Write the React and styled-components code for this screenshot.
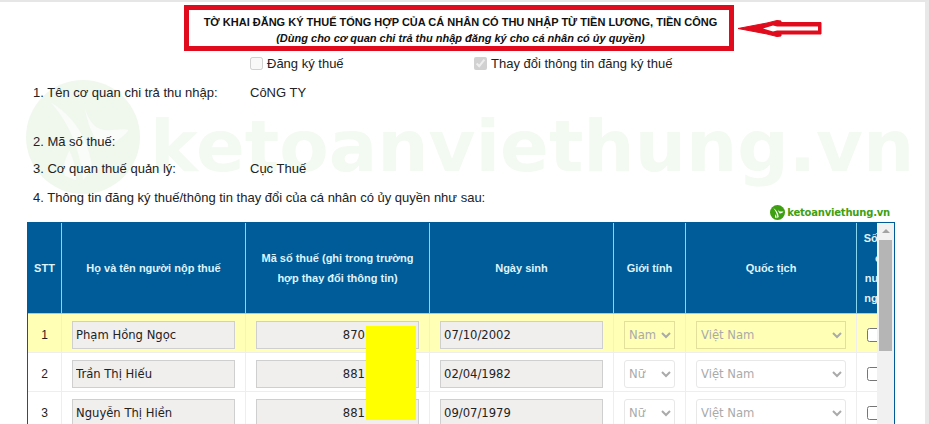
import React from 'react';
import styled, {createGlobalStyle} from 'styled-components';

const GlobalStyle = createGlobalStyle`
  html, body {
    margin: 0;
    height: 100%;
    overflow: hidden;
    background: #fff;
  }
  body {
    font-family: "Liberation Sans", Arial, sans-serif;
    color: #222;
  }
`;

const Page = styled.div`
  position: relative;
  width: 929px;
  height: 424px;
  overflow: hidden;
  box-sizing: border-box;
  border-top: 2px solid #e6e6e6;
  border-right: 4px solid #e8e8e8;
`;

const Watermark = styled.div`
  position: absolute;
  left: 26px;
  top: 78px;
  display: flex;
  align-items: flex-start;
  gap: 10px;
`;

const WatermarkText = styled.span`
  padding-top: 10px;
  color: #f3faf1;
  font-family: "DejaVu Sans", sans-serif;
  font-weight: 700;
  font-size: 72px;
  line-height: 113px;
  white-space: nowrap;
`;

const Content = styled.div`
  position: relative;
`;

const TitleRow = styled.div`
  display: flex;
  align-items: center;
  padding: 3px 0 0 184px;
  gap: 3px;
`;

const TitleBox = styled.div`
  box-sizing: border-box;
  width: 550px;
  height: 46px;
  padding-left: 3px;
  border: 5px solid #e00b1c;
  text-align: center;
  color: #111;
`;

const Title = styled.div`
  font-weight: 700;
  font-size: 11px;
  line-height: 17px;
  margin-top: 4px;
`;

const Subtitle = styled.div`
  font-weight: 700;
  font-style: italic;
  font-size: 11px;
  line-height: 15px;
`;

const CheckRow = styled.div`
  display: flex;
  padding: 2px 0 0 250px;
  height: 20px;
  align-items: center;
`;

const CheckLabel = styled.label`
  display: flex;
  align-items: center;
  gap: 4px;
  width: 224px;
  font-size: 13px;
`;

const GrayCheck = styled.input`
  width: 13px;
  height: 13px;
  margin: 0;
`;

const InfoRow = styled.div`
  display: flex;
  padding-left: 33px;
  height: ${p => p.$h}px;
  margin-top: ${p => p.$top || 0}px;
  align-items: center;
  font-size: 13px;
  white-space: nowrap;
`;

const InfoLabel = styled.span`
  width: 217px;
`;

const BrandRow = styled.div`
  display: flex;
  justify-content: flex-end;
  align-items: center;
  gap: 2px;
  height: 15px;
  margin-top: -2px;
  padding-right: 35px;
  color: #3e9f12;
  font-family: "DejaVu Sans", sans-serif;
  font-size: 10px;
  font-weight: 700;
  letter-spacing: -0.2px;
`;

const Frame = styled.div`
  display: flex;
  box-sizing: border-box;
  width: 868px;
  margin: 2px 0 0 27px;
  border: 1px solid #005c97;
  border-bottom: 0;
  height: 210px;
`;

const TableClip = styled.div`
  flex: 1;
  min-width: 0;
  overflow: hidden;
`;

const Table = styled.table`
  table-layout: fixed;
  width: 873px;
  border-collapse: separate;
  border-spacing: 0;
`;

const HeadCell = styled.th`
  height: 91px;
  padding: 0;
  box-sizing: border-box;
  background: #005b99;
  color: #dff3fb;
  font-size: 11px;
  font-weight: 700;
  line-height: 20px;
  text-align: center;
  border-right: 1px solid #8ad6ec;
  border-bottom: 1px solid #8ad6ec;
  white-space: nowrap;
  &:last-child {
    border-right: 0;
  }
`;

const Row = styled.tr`
  background: ${p => (p.$active ? '#ffffb6' : 'transparent')};
`;

const Cell = styled.td`
  box-sizing: border-box;
  height: 39px;
  padding: 4px 10px 0;
  border-right: 1px solid #eeeeee;
  border-bottom: 1px solid #eeeeee;
  font-size: 12px;
  text-align: ${p => p.$align || 'left'};
  &:last-child {
    border-right: 0;
  }
`;

const TextBox = styled.input`
  display: block;
  box-sizing: border-box;
  width: 100%;
  height: 28px;
  padding: 0 ${p => p.$pr || 3}px 0 3px;
  border: 1px solid #c8c8c8;
  background: #f1eeee;
  color: #222;
  font-family: "DejaVu Sans", sans-serif;
  font-size: 11.6px;
  text-align: ${p => p.$align || 'left'};
  outline: 1px solid #cfcfcf;
  outline-offset: -1px;
  opacity: 1;
  -webkit-text-fill-color: #222;
`;

const Picker = styled.select`
  display: block;
  box-sizing: border-box;
  width: 100%;
  height: 28px;
  padding: 0;
  border: 1px solid ${p => (p.$active ? '#e2e09a' : '#e8e8e8')};
  border-radius: ${p => (p.$active ? 0 : 3)}px;
  background-color: transparent;
  font-family: "DejaVu Sans", sans-serif;
  font-size: 11.6px;
  opacity: 1;
  color: #aaa;
`;

const RowCheck = styled.input`
  display: block;
  width: 14px;
  height: 14px;
  margin: 0;
`;

const Scrollbar = styled.div`
  position: relative;
  flex: none;
  width: 17px;
  background: #f1f1f1;
`;

const ScrollArrow = styled.div`
  margin: 6px auto 0;
  width: 0;
  height: 0;
  border-left: 4px solid transparent;
  border-right: 4px solid transparent;
  border-bottom: 4px solid #a3a3a3;
`;

const ScrollThumb = styled.div`
  margin: 7px 2px 0;
  height: 111px;
  background: #b5b5b5;
`;

const Redaction = styled.div`
  position: absolute;
  left: 366px;
  top: 324px;
  width: 50px;
  height: 94px;
  background: #ffff00;
`;

const Leaf = ({size, circle, mark}) => (
  <svg width={size} height={size} viewBox="0 0 100 100">
    <circle cx="50" cy="50" r="50" fill={circle} />
    <path
      fill={mark}
      d="M22 20 C40 30 56 52 58 78 L50 88 C48 62 38 38 22 20 Z M52 26 C56 38 62 44 72 44 C80 44 86 42 90 44 C80 56 70 58 64 56 C58 48 54 38 52 26 Z M38 62 C34 70 32 76 34 84 L44 88 C44 78 42 70 38 62 Z"
    />
  </svg>
);

const Arrow = () => (
  <svg width="86" height="19" viewBox="0 0 86 19">
    <path
      d="M1 9.5 L30 4 L40 1.5 L44 2 L44 3.5 L84 3.5 L84 15 L44 15 L44 17 L40 17.5 L30 15 Z"
      fill="#e00b1c"
      stroke="#e00b1c"
      strokeLinejoin="round"
    />
    <path d="M26 9.5 L36 6.5 L40 7.5 L81 7.5 L81 11.5 L40 11.5 L36 12.5 Z" fill="#fff" />
  </svg>
);

const columns = [34, 184, 184, 184, 72, 171, 44];

const rows = [
  {no: 1, name: 'Phạm Hồng Ngọc', tax: '870', dob: '07/10/2002', sex: 'Nam', active: true},
  {no: 2, name: 'Trần Thị Hiếu', tax: '881', dob: '02/04/1982', sex: 'Nữ'},
  {no: 3, name: 'Nguyễn Thị Hiền', tax: '881', dob: '09/07/1979', sex: 'Nữ'},
];

export default function App() {
  return (
    <Page>
      <GlobalStyle />
      <Watermark>
        <Leaf size={114} circle="#f0f8ee" mark="#f9fcf8" />
        <WatermarkText>ketoanviethung.vn</WatermarkText>
      </Watermark>
      <Content>
        <TitleRow>
          <TitleBox>
            <Title>TỜ KHAI ĐĂNG KÝ THUẾ TỔNG HỢP CỦA CÁ NHÂN CÓ THU NHẬP TỪ TIỀN LƯƠNG, TIỀN CÔNG</Title>
            <Subtitle>(Dùng cho cơ quan chi trả thu nhập đăng ký cho cá nhân có ủy quyền)</Subtitle>
          </TitleBox>
          <Arrow />
        </TitleRow>
        <CheckRow>
          <CheckLabel><GrayCheck type="checkbox" disabled readOnly />Đăng ký thuế</CheckLabel>
          <CheckLabel><GrayCheck type="checkbox" disabled checked readOnly />Thay đổi thông tin đăng ký thuế</CheckLabel>
        </CheckRow>
        <InfoRow $h={20} $top={9}><InfoLabel>1. Tên cơ quan chi trả thu nhập:</InfoLabel>CôNG TY</InfoRow>
        <InfoRow $h={20} $top={29}><InfoLabel>2. Mã số thuế:</InfoLabel></InfoRow>
        <InfoRow $h={20} $top={7}><InfoLabel>3. Cơ quan thuế quản lý:</InfoLabel>Cục Thuế</InfoRow>
        <InfoRow $h={20} $top={9}>4. Thông tin đăng ký thuế/thông tin thay đổi của cá nhân có ủy quyền như sau:</InfoRow>
        <BrandRow>
          <Leaf size={15} circle="#3e9f12" mark="#fff" />
          ketoanviethung.vn
        </BrandRow>
        <Frame>
          <TableClip>
            <Table>
              <colgroup>
                {columns.map((w, i) => <col key={i} style={{width: w}} />)}
              </colgroup>
              <thead>
                <tr>
                  <HeadCell>STT</HeadCell>
                  <HeadCell>Họ và tên người nộp thuế</HeadCell>
                  <HeadCell>Mã số thuế (ghi trong trường<br />hợp thay đổi thông tin)</HeadCell>
                  <HeadCell>Ngày sinh</HeadCell>
                  <HeadCell>Giới tính</HeadCell>
                  <HeadCell>Quốc tịch</HeadCell>
                  <HeadCell>Số hộ<br />ở<br />nước<br />ngoài</HeadCell>
                </tr>
              </thead>
              <tbody>
                {rows.map(r => (
                  <Row key={r.no} $active={r.active}>
                    <Cell $align="center">{r.no}</Cell>
                    <Cell><TextBox disabled value={r.name} readOnly /></Cell>
                    <Cell><TextBox disabled value={r.tax} readOnly $align="right" $pr={53} /></Cell>
                    <Cell><TextBox disabled value={r.dob} readOnly /></Cell>
                    <Cell>
                      <Picker disabled value={r.sex} $active={r.active} onChange={() => {}}>
                        <option>Nam</option>
                        <option>Nữ</option>
                      </Picker>
                    </Cell>
                    <Cell>
                      <Picker disabled value="Việt Nam" $active={r.active} onChange={() => {}}>
                        <option>Việt Nam</option>
                      </Picker>
                    </Cell>
                    <Cell><RowCheck type="checkbox" /></Cell>
                  </Row>
                ))}
              </tbody>
            </Table>
          </TableClip>
          <Scrollbar>
            <ScrollArrow />
            <ScrollThumb />
          </Scrollbar>
        </Frame>
      </Content>
      <Redaction />
    </Page>
  );
}
